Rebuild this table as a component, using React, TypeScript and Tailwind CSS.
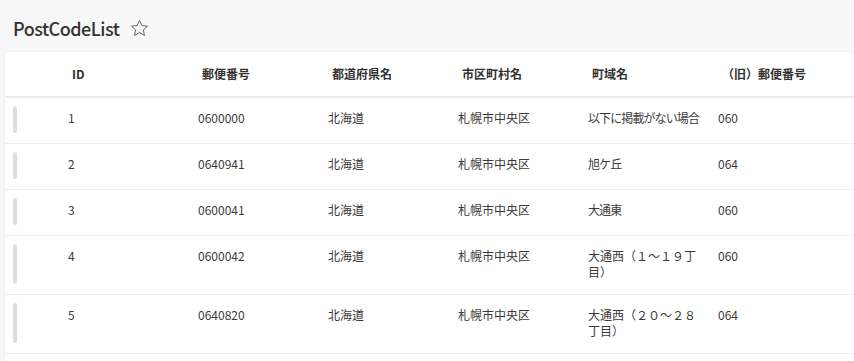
const rows = [
  { id: "1", code: "0600000", pref: "北海道", city: "札幌市中央区", town: "以下に掲載がない場合", old: "060" },
  { id: "2", code: "0640941", pref: "北海道", city: "札幌市中央区", town: "旭ケ丘", old: "064" },
  { id: "3", code: "0600041", pref: "北海道", city: "札幌市中央区", town: "大通東", old: "060" },
  { id: "4", code: "0600042", pref: "北海道", city: "札幌市中央区", town: "大通西（１～１９丁\n目）", old: "060" },
  { id: "5", code: "0640820", pref: "北海道", city: "札幌市中央区", town: "大通西（２０～２８\n丁目）", old: "064" },
];

const headers = ["郵便番号", "都道府県名", "市区町村名", "町域名", "（旧）郵便番号"];

const StarIcon = () => (
  <svg width="19" height="19" viewBox="0 0 20 20" fill="none">
    <path
      d="M10 1.5l2.5 5.4 5.9.6-4.4 4 1.25 5.8L10 14.3l-5.25 3 1.25-5.8-4.4-4 5.9-.6z"
      stroke="#605e5c"
      strokeWidth="1"
      strokeLinejoin="round"
    />
  </svg>
);

export default function App() {
  return (
    <div
      className="h-screen overflow-hidden bg-[#f8f8f8] text-[#323130]"
      style={{ fontFamily: '"Noto Sans CJK JP", "Noto Sans", sans-serif' }}
    >
      {/* Title */}
      <div className="flex items-center h-[52px] pl-[13px] pt-[4px]">
        <h1 className="text-[18px] font-medium tracking-[-0.5px]">PostCodeList</h1>
        <span className="ml-[11px] mt-[1px]">
          <StarIcon />
        </span>
      </div>

      {/* List card */}
      <div className="pl-[5px]">
        <div className="bg-white rounded-[4px] shadow-[0_0_3px_rgba(0,0,0,0.08)] text-[12px] leading-[16px] pb-[20px]">
          {/* Header */}
          <div className="flex h-[46px] items-center border-b-2 border-[#ebebeb] font-semibold">
            <div className="w-[66px] shrink-0" />
            <div className="w-[130px] shrink-0 pl-[1px]">ID</div>
            {headers.map((h) => (
              <div key={h} className="w-[130px] shrink-0 pl-[1px]">
                {h}
              </div>
            ))}
          </div>

          {/* Rows */}
          {rows.map((r) => (
            <div key={r.id} className="flex border-b border-[#efefef] text-[#3b3a39]">
              <div className="w-[63px] shrink-0 flex pl-[8px] pt-[8px] pb-[10px]">
                <div className="w-[4px] rounded-full bg-[#dedede]" />
              </div>
              <div className="flex min-h-[45px] pt-[12px] pb-[14px]">
                <div className="w-[130px] shrink-0">{r.id}</div>
                <div className="w-[130px] shrink-0">{r.code}</div>
                <div className="w-[130px] shrink-0">{r.pref}</div>
                <div className="w-[130px] shrink-0">{r.city}</div>
                <div
                  className={
                    r.town.includes("（")
                      ? "w-[130px] shrink-0 whitespace-pre-line"
                      : "w-[130px] shrink-0 tracking-[-0.9px]"
                  }
                >
                  {r.town}
                </div>
                <div className="w-[130px] shrink-0">{r.old}</div>
              </div>
            </div>
          ))}
        </div>
      </div>
    </div>
  );
}
